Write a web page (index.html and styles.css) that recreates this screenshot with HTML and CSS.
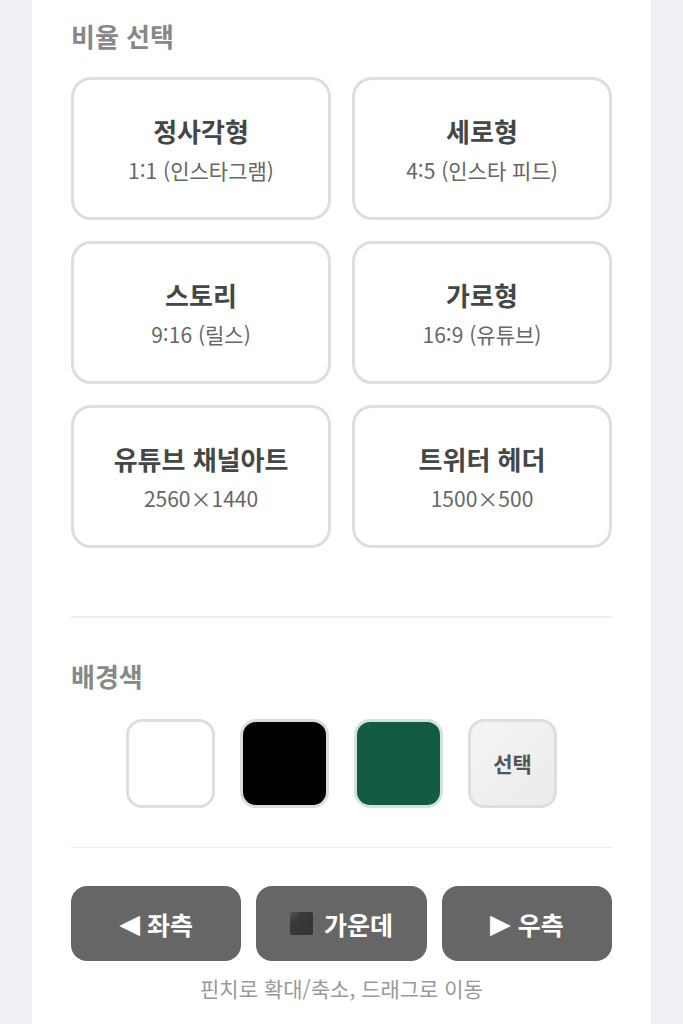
FILE: index.html
```html
<!DOCTYPE html>
<html lang="ko">
<head>
<meta charset="utf-8">
<link rel="stylesheet" href="styles.css">
</head>
<body>
<div class="panel">
  <section class="section ratio">
    <h2 class="sec-title">비율 선택</h2>
    <div class="grid">
      <div class="opt"><div class="opt-title">정사각형</div><div class="opt-sub">1:1 (인스타그램)</div></div>
      <div class="opt"><div class="opt-title">세로형</div><div class="opt-sub">4:5 (인스타 피드)</div></div>
      <div class="opt"><div class="opt-title">스토리</div><div class="opt-sub">9:16 (릴스)</div></div>
      <div class="opt"><div class="opt-title">가로형</div><div class="opt-sub">16:9 (유튜브)</div></div>
      <div class="opt"><div class="opt-title">유튜브 채널아트</div><div class="opt-sub">2560×1440</div></div>
      <div class="opt"><div class="opt-title">트위터 헤더</div><div class="opt-sub">1500×500</div></div>
    </div>
  </section>
  <hr class="divider first">
  <section class="section bg">
    <h2 class="sec-title">배경색</h2>
    <div class="swatches">
      <div class="swatch white"></div>
      <div class="swatch black"></div>
      <div class="swatch green"></div>
      <div class="swatch pick">선택</div>
    </div>
  </section>
  <hr class="divider second">
  <div class="align">
    <button class="abtn"><span class="tri">◀</span>좌측</button>
    <button class="abtn"><span class="sq"></span>가운데</button>
    <button class="abtn"><span class="tri">▶</span>우측</button>
  </div>
  <p class="hint">핀치로 확대/축소, 드래그로 이동</p>
</div>
</body>
</html>
```
FILE: styles.css
```css
* { box-sizing: border-box; }
html, body { margin: 0; padding: 0; }
body {
  background: #eef0f3;
  font-family: "Noto Sans CJK KR", "Noto Sans", sans-serif;
}
.panel {
  margin: 0 32px;
  background: #fff;
  padding: 19px 39px 40px;
  min-height: 1024px;
}
.sec-title {
  margin: 0;
  font-size: 26px;
  line-height: 34px;
  font-weight: 700;
  color: #888;
}
.ratio .sec-title { margin-bottom: 24px; }
.grid {
  display: grid;
  grid-template-columns: 1fr 1fr;
  gap: 21px;
}
.opt {
  height: 143px;
  border: 3px solid #dedede;
  border-radius: 20px;
  display: flex;
  flex-direction: column;
  align-items: center;
  justify-content: center;
  text-align: center;
}
.opt-title {
  font-size: 26px;
  line-height: 31px;
  font-weight: 700;
  color: #434846;
  margin-bottom: 12px;
}
.opt-sub {
  font-size: 21px;
  line-height: 25px;
  color: #666;
}
.divider {
  border: 0;
  height: 1.5px;
  background: #eeeeee;
  margin: 0;
}
.divider.first { margin-top: 68px; margin-bottom: 41px; }
.bg .sec-title { margin-bottom: 26px; }
.swatches {
  display: flex;
  justify-content: center;
  gap: 25px;
}
.swatch {
  width: 89px;
  height: 89px;
  border-radius: 16px;
  border: 3px solid #dedede;
}
.swatch.white { background: #fff; }
.swatch.black { background: #000; border-color: #dcdcdc; }
.swatch.green { background: #145c41; border-color: #d3e2da; }
.swatch.pick {
  background: linear-gradient(135deg, #f4f4f4, #ebebeb);
  display: flex;
  align-items: center;
  justify-content: center;
  font-size: 21px;
  font-weight: 700;
  color: #555;
}
.divider.second { margin-top: 39px; margin-bottom: 38px; }
.align {
  display: flex;
  gap: 15px;
}
.abtn {
  flex: 1;
  height: 75px;
  border: 0;
  border-radius: 16px;
  background: #666;
  color: #fff;
  font-family: inherit;
  font-size: 25px;
  font-weight: 700;
  display: flex;
  align-items: center;
  justify-content: center;
  gap: 7px;
  padding: 0;
}
.tri {
  font-family: "DejaVu Sans", sans-serif;
  font-size: 27px;
  font-weight: 400;
  line-height: 1;
}
.sq {
  display: inline-block;
  width: 23px;
  height: 23px;
  border-radius: 2px;
  background: linear-gradient(135deg, #555 0%, #3a3a3a 30%, #333 100%);
  margin-right: 4px;
}
.hint {
  margin: 15px 0 0;
  text-align: center;
  font-size: 21px;
  line-height: 25px;
  color: #999;
}
```
